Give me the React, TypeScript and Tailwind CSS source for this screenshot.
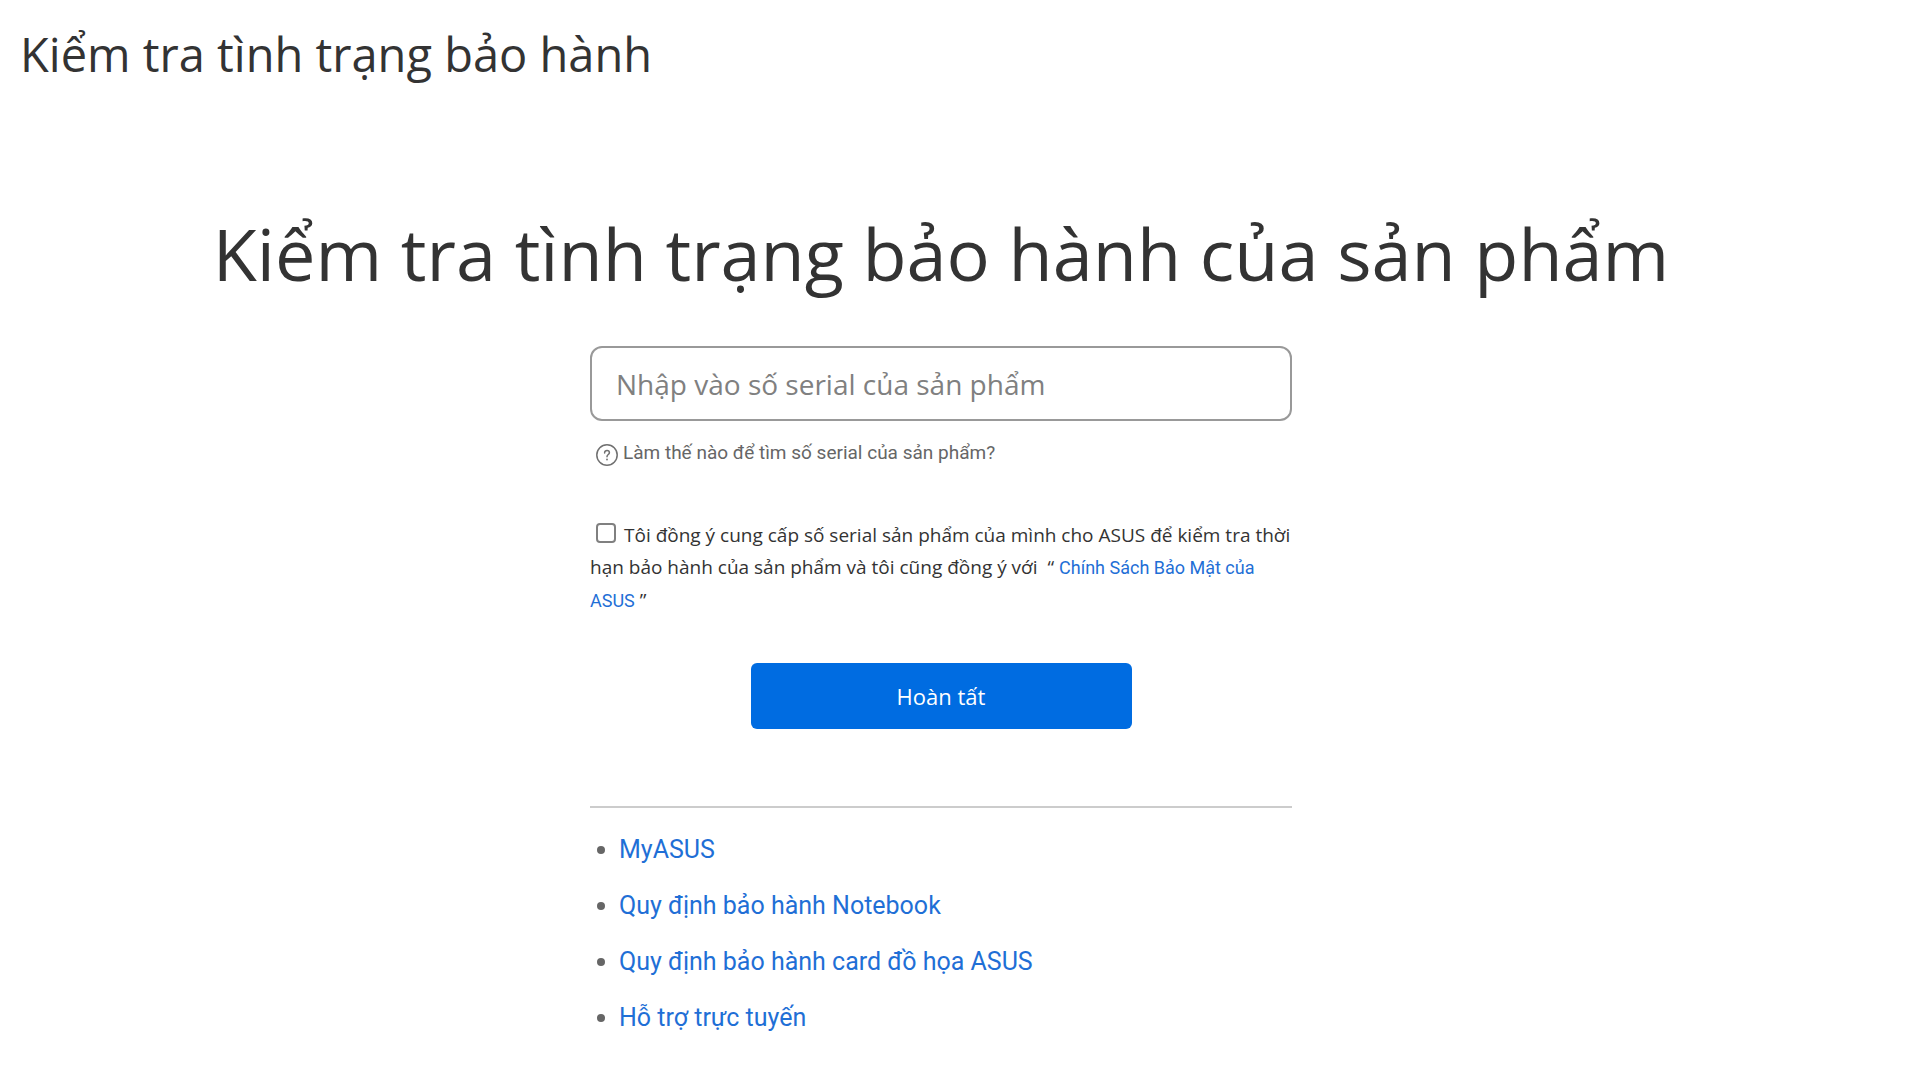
import { useState } from "react";

const links = [
  "MyASUS",
  "Quy định bảo hành Notebook",
  "Quy định bảo hành card đồ họa ASUS",
  "Hỗ trợ trực tuyến",
];

const HelpIcon = () => (
  <svg className="size-6 shrink-0" viewBox="0 0 24 24" fill="none" stroke="#707070" strokeWidth="1.5" strokeLinecap="round">
    <circle cx="12" cy="12" r="10.2" />
    <path d="M9.6 9.9c0-1.5 1-2.4 2.4-2.4s2.4.9 2.4 2.2c0 1.8-2.4 1.9-2.4 4" />
    <path d="M12 16.4v.1" strokeWidth="1.8" />
  </svg>
)

const SerialForm = () => {
  const [agreed, setAgreed] = useState(false)

  return (
    <form className="w-full" onSubmit={(e) => e.preventDefault()}>
      <input
        type="text"
        aria-label="Nhập vào số serial của sản phẩm"
        placeholder="Nhập vào số serial của sản phẩm"
        className="block h-[75px] w-full rounded-xl border-2 border-[#999999] px-6 font-['Open_Sans',sans-serif] text-[28px] text-[#333333] placeholder:text-[#808080]"
      />
      <a href="#" className="mt-5 flex items-start gap-1 pl-[5px] text-[19px] leading-6 text-[#666666]">
        <span className="pt-0.5"><HelpIcon /></span>
        <span>Làm thế nào để tìm số serial của sản phẩm?</span>
      </a>
      <div className="mt-[52px] font-['Open_Sans',sans-serif] text-[19px] leading-8 text-[#333333]">
        <input
          id="agree"
          type="checkbox"
          checked={agreed}
          onChange={() => setAgreed(!agreed)}
          className="mr-2 ml-1.5 size-5 appearance-none rounded border-2 border-[#808080] align-[-1px] checked:bg-[#006ce1]"
        />
        <label htmlFor="agree">
          Tôi đồng ý cung cấp số serial sản phẩm của mình cho ASUS để kiểm tra thời hạn bảo hành của sản phẩm và tôi cũng đồng ý với
        </label>
        <span className="ml-2.5">“ </span>
        <a href="#" className="font-[Roboto,sans-serif] text-[18px] text-[#1f6fd6]">Chính Sách Bảo Mật của ASUS</a> ”
      </div>
      <button
        type="submit"
        className="mx-auto mt-[46px] block h-[66px] w-[381px] rounded-md bg-[#006ce1] font-['Open_Sans',sans-serif] text-[22px] text-white"
      >
        Hoàn tất
      </button>
    </form>
  )
}

export default function App() {
  return (
    <div className="min-h-screen bg-white font-[Roboto,sans-serif]">
      <h2 className="px-5 pt-5 font-['Open_Sans',sans-serif] text-[47px] leading-[68px] text-[#333333]">
        Kiểm tra tình trạng bảo hành
      </h2>
      <main className="flex flex-col items-center pt-28 pr-[38px]">
        <h1 className="text-center font-['Open_Sans',sans-serif] text-[72px] leading-[106px] text-[#333333]">
          Kiểm tra tình trạng bảo hành của sản phẩm
        </h1>
        <div className="mt-10 w-full max-w-[702px]">
          <SerialForm />
          <ul className="mt-[77px] border-t-2 border-[#cccccc] pt-3.5">
            {links.map((link) => (
              <li className="flex h-14 items-center gap-3.5 pl-[7px]" key={link}>
                <span className="size-2 rounded-full bg-[#666666]" />
                <a href="#" className="text-[25px] text-[#1f6fd6]">{link}</a>
              </li>
            ))}
          </ul>
        </div>
      </main>
    </div>
  );
}
